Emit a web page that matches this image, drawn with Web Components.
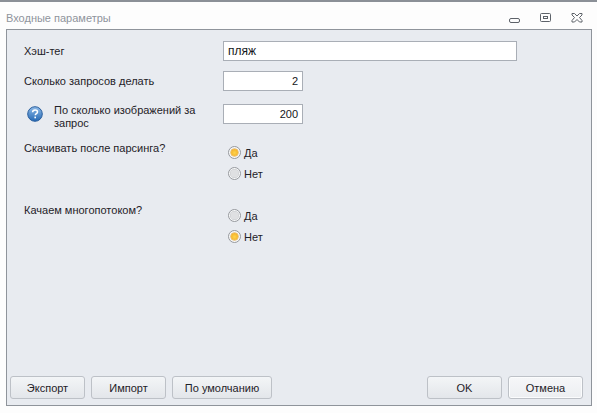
<!DOCTYPE html>
<html>
<head>
<meta charset="utf-8">
<title>Входные параметры</title>
<style>
  html, body { margin: 0; padding: 0; background: #fdfdfd; }
  body { font: 11px "Liberation Sans", Tahoma, sans-serif; color: #1f2228; }
</style>
</head>
<body>

<param-dialog caption="Входные параметры">
  <param-row top="11" label="Хэш-тег"><text-box value="пляж" width="294" size="12"></text-box></param-row>
  <param-row top="10" label="Сколько запросов делать"><text-box value="2" width="80" align="right"></text-box></param-row>
  <param-row top="13" label="По сколько изображений за запрос" hint><text-box value="200" width="80" align="right"></text-box></param-row>
  <param-row top="13" label="Скачивать после парсинга?" stack>
    <radio-item checked>Да</radio-item>
    <radio-item>Нет</radio-item>
  </param-row>
  <param-row top="22" label="Качаем многопотоком?" stack style="--label-shift:-2px">
    <radio-item>Да</radio-item>
    <radio-item checked>Нет</radio-item>
  </param-row>

  <flat-button slot="left" width="75">Экспорт</flat-button>
  <flat-button slot="left" width="75">Импорт</flat-button>
  <flat-button slot="left" width="100">По умолчанию</flat-button>
  <flat-button slot="right" width="75">OK</flat-button>
  <flat-button slot="right" width="75" active>Отмена</flat-button>
</param-dialog>

<script>
class ParamDialog extends HTMLElement{
    constructor(){
        super();
        this.attachShadow({mode:"open"});
        this.shadowRoot.innerHTML = `
        <style>
          :host { display: flex; flex-direction: column; width: 597px; height: 413px; box-sizing: border-box;
                  border-top: 2px solid #8b9097; background: #fdfdfd; }
          .title { height: 27px; flex: none; display: flex; align-items: center; padding: 0 14px 0 6px; color: #8f949c; }
          .title span { flex: 1; position: relative; top: 2px; }
          .title svg { display: block; margin-left: 20px; position: relative; top: 2px; }
          .panel { flex: none; height: 377px; margin: 0 5px 0 6px; box-sizing: border-box; border: 1px solid #8f949b;
                   background: #e8ebf0; display: flex; flex-direction: column; }
          .form { flex: 1; display: flex; flex-direction: column; }
          .foot { flex: none; display: flex; justify-content: space-between; padding: 0 8px 6px 3px; }
          .group { display: flex; gap: 6px; }
        </style>
        <div class="title">
          <span></span>
          <svg width="11" height="10" viewBox="0 0 11 10" fill="none" stroke="#5d6269" style="top:4px"><rect x=".5" y="3.5" width="10" height="4" rx="1.5"/></svg>
          <svg width="11" height="10" viewBox="0 0 11 10" fill="none" stroke="#5d6269"><rect x=".5" y=".5" width="10" height="8" rx="1"/><rect x="3.5" y="3.5" width="4" height="2"/></svg>
          <svg width="12" height="10" viewBox="0 0 12 10" fill="none" stroke="#5d6269"><path d="M1 .5h2.5L6 3 8.5 .5H11V2L8.5 4.5 11 7.5V9H8.5L6 6.5 3.5 9H1V7.5L3.5 4.5 1 2z"/></svg>
        </div>
        <div class="panel">
          <div class="form"><slot></slot></div>
          <div class="foot">
            <div class="group"><slot name="left"></slot></div>
            <div class="group"><slot name="right"></slot></div>
          </div>
        </div>`;
        this.shadowRoot.querySelector(".title span").textContent = this.getAttribute("caption");
    }
}

class ParamRow extends HTMLElement{
    constructor(){
        super();
        this.attachShadow({mode:"open"});
        this.shadowRoot.innerHTML = `
        <style>
          :host { display: grid; grid-template-columns: 199px auto; justify-content: start; padding-left: 17px; }
          .label { display: flex; align-items: center; gap: 11px; line-height: 13px; }
          :host([hint]) .label { padding-left: 3px; padding-right: 8px; }
          :host([stack]) .label { align-items: flex-start; margin-top: var(--label-shift, -1px); }
          :host([stack]) .field { padding: 0 0 0 5px; margin-top: -1px; }
          .field { display: flex; flex-direction: column; }
          svg { flex: none; position: relative; top: -3px; }
        </style>
        <div class="label"><span class="text"></span></div>
        <div class="field"><slot></slot></div>`;
        this.shadowRoot.querySelector(".text").textContent = this.getAttribute("label");
        this.style.marginTop = this.getAttribute("top") + "px";
        if (this.hasAttribute("hint")){
            // round blue help icon
            this.shadowRoot.querySelector(".label").insertAdjacentHTML("afterbegin", `
            <svg width="16" height="16" viewBox="0 0 16 16">
              <defs><linearGradient id="h" x1="0" y1="0" x2="0" y2="1"><stop offset="0" stop-color="#8fbbe8"/><stop offset="1" stop-color="#2468b4"/></linearGradient></defs>
              <circle cx="8" cy="8" r="7.3" fill="url(#h)" stroke="#2a5f9e"/>
              <path d="M5.6 6.2c0-1.5 1.1-2.3 2.5-2.3s2.4.8 2.4 2c0 1.7-2.2 1.8-2.2 3.4" fill="none" stroke="#fff" stroke-width="1.5"/>
              <rect x="7.4" y="10.6" width="1.6" height="1.7" fill="#fff"/>
            </svg>`);
        }
    }
}

class TextBox extends HTMLElement{
    constructor(){
        super();
        this.attachShadow({mode:"open"});
        this.shadowRoot.innerHTML = `
        <style>
          :host { display: block; }
          div { box-sizing: border-box; height: 20px; border: 1px solid #a9aeb6; background: #fff; color: #14161a;
                line-height: 18px; padding: 0 4px 0 4px; font-size: 11px; }
        </style>
        <div></div>`;
        const box = this.shadowRoot.querySelector("div");
        box.textContent = this.getAttribute("value");
        box.style.width = this.getAttribute("width") + "px";
        box.style.textAlign = this.getAttribute("align") || "left";
        if (this.hasAttribute("size")) box.style.fontSize = this.getAttribute("size") + "px";
    }
}

class RadioItem extends HTMLElement{
    constructor(){
        super();
        this.attachShadow({mode:"open"});
        this.shadowRoot.innerHTML = `
        <style>
          :host { display: flex; align-items: center; height: 21px; gap: 3px; font-size: 11px; }
          i { width: 13px; height: 13px; box-sizing: border-box; border-radius: 50%; border: 1px solid #96999e;
              background: #f7f8f9; display: flex; align-items: center; justify-content: center; }
          i::after { content: ""; width: 9px; height: 9px; border-radius: 50%; background: #dfe0e2; box-shadow: inset 0 0 0 .5px #c9cbce; }
          :host([checked]) i::after { width: 7px; height: 7px;
              background: radial-gradient(circle at 50% 55%, #fdd44e, #f2a51c); box-shadow: 0 0 0 .5px #d99a2b; }
        </style>
        <i></i><span><slot></slot></span>`;
    }
}

class FlatButton extends HTMLElement{
    constructor(){
        super();
        this.attachShadow({mode:"open"});
        this.shadowRoot.innerHTML = `
        <style>
          :host { display: flex; align-items: center; justify-content: center; box-sizing: border-box; height: 23px;
                  padding-top: 1px; border: 1px solid #bdc1c7; border-radius: 3px; color: #1f2228; font-size: 11px;
                  background: linear-gradient(#f3f5f7, #e3e6ea); }
          :host([active]) { box-shadow: inset 0 0 0 1px #fbfcfd; background: linear-gradient(#f6f7f9, #eceef1); }
        </style>
        <slot></slot>`;
        this.style.width = this.getAttribute("width") + "px";
    }
}

customElements.define("param-dialog",ParamDialog);
customElements.define("param-row",ParamRow);
customElements.define("text-box",TextBox);
customElements.define("radio-item",RadioItem);
customElements.define("flat-button",FlatButton);
</script>
</body>
</html>
